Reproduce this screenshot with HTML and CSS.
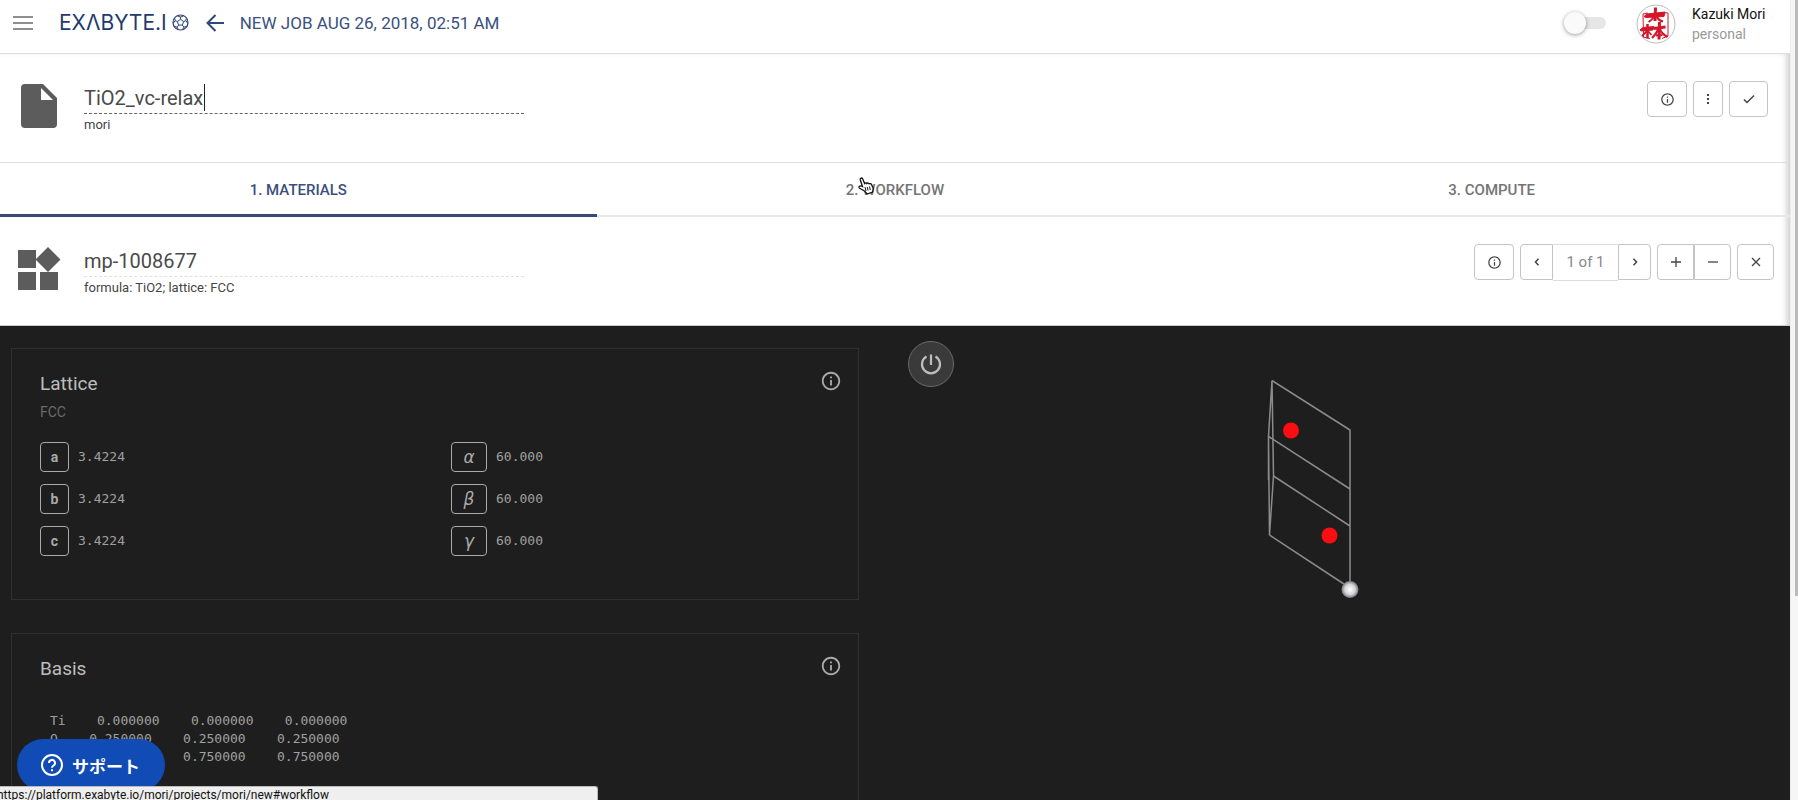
FILE: index.html
```html
<!DOCTYPE html>
<html lang="en">
<head>
<meta charset="utf-8">
<title>New Job - Exabyte.io</title>
<link rel="stylesheet" href="styles.css">
</head>
<body>
<svg class="defs" aria-hidden="true">
  <symbol id="info" viewBox="0 0 24 24"><path d="M11 17h2v-6h-2v6zm1-15C6.480 2 2 6.480 2 12s4.480 10 10 10 10-4.480 10-10S17.520 2 12 2zm0 18c-4.410 0-8-3.590-8-8s3.590-8 8-8 8 3.590 8 8-3.590 8-8 8zM11 9h2V7h-2v2z"/></symbol>
</svg>
<div class="app">
  <header class="topbar">
    <button class="plain menu" aria-label="Menu"><svg width="20" height="14" viewBox="0 0 20 14"><path d="M0 1h20M0 7h20M0 13h20" stroke="#8f8f8f" stroke-width="2"/></svg></button>
    <a class="logo" href="#" aria-label="Exabyte.io"><span>EXΛBYTE.I</span>
      <svg width="17" height="17" viewBox="0 0 17 17" fill="none" stroke="#2c4475"><circle cx="8.500" cy="8.500" r="7.500" stroke-width="1.200"/><path d="M8.500 5.300l3.100 2.200-1.200 3.600H6.600L5.400 7.500zM8.500 5.300V3M11.600 7.500l2.300-.8M10.400 11.100l1.500 2M6.600 11.100l-1.500 2M5.400 7.500l-2.300-.8M5.500 2L8.500 3l3-1M13.900 6.700l.2-2.200M13.900 6.700l1.800 2.600M11.900 13.100l2.800-.6M11.900 13.100l-1.200 2.300M5.100 13.100l1.200 2.300M5.100 13.100l-2.800-.6M3.100 6.700L1.300 9.300M3.100 6.700l-.2-2.200"/></svg></a>
    <button class="plain" aria-label="Back"><svg width="18" height="18" viewBox="0 0 18 18"><path d="M18 9H2M9.500 1L1.500 9l8 8" fill="none" stroke="#2f4a7d" stroke-width="2"/></svg></button>
    <h1>NEW JOB AUG 26, 2018, 02:51 AM</h1>
    <input class="switch" type="checkbox" aria-label="Toggle">
    <svg class="avatar" width="40" height="40" viewBox="0 0 40 40" role="img" aria-label="Avatar">
      <circle cx="20" cy="20" r="19" fill="#fff" stroke="#bbb"/>
      <g fill="none" stroke="#d3162a">
        <path d="M12 9L7 10l.5 23M7 33l7 1.500M26 8.500l6 .5v23l-6 2.500" stroke-width="1"/>
        <path d="M8 12.500l3-2.500 18-2-1 4.500-18 1z" fill="#d3162a" stroke-width="1"/><path d="M19.500 3.500L19 17" stroke-width="3"/><path d="M18 12c-1 3-3 4.500-5.500 6M21 13c1 2 3 4 6 4.500" stroke-width="2"/>
        <path d="M4 26l3-2.500 11-1-1 3.500-12 1z" fill="#d3162a" stroke-width="1"/><path d="M11.500 20v14.500" stroke-width="2.500"/><path d="M11 27l-5 5M12 27l3.500 4" stroke-width="1.800"/>
        <path d="M18 24.500l11.500-1.500" stroke-width="3"/><path d="M23.500 18l-.5 17.500" stroke-width="3"/><path d="M22 25c-1 4-3 6-6 9M24 25c1 4 4 6 7.500 8M20 31.500l6.500-.5" stroke-width="2.200"/>
      </g>
    </svg>
    <div class="user"><strong>Kazuki Mori</strong><span>personal</span></div>
  </header>

  <main>
    <section class="entity job">
      <svg class="entity-icon" width="44" height="48" viewBox="0 0 44 48"><path d="M8 3h18l14 14v26a4 4 0 0 1-4 4H8a4 4 0 0 1-4-4V7a4 4 0 0 1 4-4z" fill="#5c5c5c"/><path d="M24 7v12h12z" fill="#fff"/></svg>
      <div class="naming">
        <input class="name editing" aria-label="Job name" value="TiO2_vc-relax">
        <span class="caret"></span>
        <p>mori</p>
      </div>
      <div class="actions">
        <button class="btn" aria-label="Info"><svg width="15" height="15"><use href="#info"/></svg></button>
        <button class="btn narrow" aria-label="More"><svg width="4" height="12" viewBox="0 0 4 12" fill="#444"><path d="M1 1h2v2H1zM1 5h2v2H1zM1 9h2v2H1z"/></svg></button>
        <button class="btn check" aria-label="Confirm"><svg width="12" height="10" viewBox="0 0 12 10"><path d="M1 5.500L4 8.500 11 1.500" fill="none" stroke="#444" stroke-width="1.500"/></svg></button>
      </div>
    </section>

    <nav class="tabs">
      <a class="active" href="#materials">1. MATERIALS</a>
      <a href="#workflow">2. WORKFLOW
        <svg class="pointer" width="17" height="18" viewBox="0 0 17 18"><path d="M4.500 9.500L2.300 3C1.800 1 4 .3 4.700 2l1.900 4.500c.8-1 2-.8 2.300 0 .8-.8 2-.5 2.300.3.800-.5 2.100-.2 2.300.8l1.500 3.200c.4 1.500-.2 2.500-.4 4.200l-5.500 2-2.600-3C4.500 13 1.500 11.500 1 10.500c-.3-1.500 1.500-2 3.500-1z" fill="#fff" stroke="#111" stroke-width="1.300"/><path d="M7 10l1 4M9.300 10l.8 3.500M11.500 9.500l.8 3.500" stroke="#111"/></svg></a>
      <a href="#compute">3. COMPUTE</a>
    </nav>

    <section class="entity material">
      <svg class="entity-icon" width="44" height="48" viewBox="0 0 44 48" fill="#5c5c5c"><path d="M1 6h18v18H1zM1 28h18v18H1zM23 28h18v18H23zM31 3l12.500 12.500L31 28 18.500 15.500z"/></svg>
      <div class="naming">
        <input class="name" aria-label="Material name" value="mp-1008677">
        <p>formula: TiO2; lattice: FCC</p>
      </div>
      <div class="actions">
        <button class="btn" aria-label="Info"><svg width="15" height="15"><use href="#info"/></svg></button>
        <div class="group pager">
          <button class="btn" aria-label="Previous"><svg width="6" height="8" viewBox="0 0 6 8"><path d="M4.500.800L1.500 4l3 3.200" fill="none" stroke="#444" stroke-width="1.500"/></svg></button>
          <span class="count">1 of 1</span>
          <button class="btn" aria-label="Next"><svg width="6" height="8" viewBox="0 0 6 8"><path d="M1.500.800l3 3.200-3 3.200" fill="none" stroke="#444" stroke-width="1.500"/></svg></button>
        </div>
        <div class="group">
          <button class="btn mid" aria-label="Add"><svg width="10" height="10" viewBox="0 0 10 10"><path d="M5 0v10M0 5h10" stroke="#444" stroke-width="1.300"/></svg></button>
          <button class="btn mid" aria-label="Remove"><svg width="10" height="10" viewBox="0 0 10 10"><path d="M0 5h10" stroke="#444" stroke-width="1.300"/></svg></button>
        </div>
        <button class="btn mid" aria-label="Close"><svg width="10" height="10" viewBox="0 0 10 10"><path d="M1 1l8 8M9 1L1 9" stroke="#444" stroke-width="1.300"/></svg></button>
      </div>
    </section>

    <div class="workspace">
      <div class="panels">
        <section class="panel">
          <div class="panel-head"><h2>Lattice</h2><button class="plain" aria-label="Lattice info"><svg width="22" height="22"><use href="#info"/></svg></button></div>
          <p class="kind">FCC</p>
          <div class="params">
            <dl>
              <dt>a</dt><dd>3.4224</dd>
              <dt>b</dt><dd>3.4224</dd>
              <dt>c</dt><dd>3.4224</dd>
            </dl>
            <dl class="angles">
              <dt>α</dt><dd>60.000</dd>
              <dt>β</dt><dd>60.000</dd>
              <dt>γ</dt><dd>60.000</dd>
            </dl>
          </div>
        </section>
        <section class="panel">
          <div class="panel-head"><h2>Basis</h2><button class="plain" aria-label="Basis info"><svg width="22" height="22"><use href="#info"/></svg></button></div>
<pre>Ti    0.000000    0.000000    0.000000
O    0.250000    0.250000    0.250000
O    0.750000    0.750000    0.750000</pre>
        </section>
      </div>
      <div class="viewer">
        <button class="power" aria-label="Toggle interaction"><svg width="24" height="24" viewBox="0 0 24 24"><path d="M12 2.500V13M7.500 4.500a9 9 0 1 0 9 0" fill="none" stroke="#bdbdbd" stroke-width="2.200"/></svg></button>
        <svg class="cell" viewBox="1223 380 140 230" role="img" aria-label="Unit cell">
          <defs><radialGradient id="ti"><stop offset="0" stop-color="#fff"/><stop offset=".6" stop-color="#d5d5da"/><stop offset="1" stop-color="#777"/></radialGradient></defs>
          <g fill="none" stroke="#8c8c8c" stroke-width="1.500">
            <path d="M1272 380.500L1350 430v159M1268.500 436.500L1350 489M1273.500 476L1350 526M1269.500 535L1350 588"/>
            <path d="M1272 380.500l-3.500 56 1 98.500 4-59zM1268.500 436.500V480"/>
          </g>
          <circle cx="1291" cy="430.500" r="8" fill="#fb0d12"/>
          <circle cx="1329.500" cy="535.500" r="8" fill="#fb0d12"/>
          <circle cx="1350" cy="589.500" r="8.500" fill="url(#ti)"/>
        </svg>
      </div>
    </div>
  </main>
</div>
<div class="scrollbar"><div class="thumb"></div></div>
<button class="support"><svg width="24" height="24" viewBox="0 0 24 24" fill="none" stroke="#fff" stroke-width="2"><circle cx="12" cy="12" r="10"/><path d="M9 10a3 3 0 1 1 4.500 2.500C12.400 13.200 12 13.600 12 14.800M12 16.300v2"/></svg>サポート</button>
<div class="status">https://platform.exabyte.io/mori/projects/mori/new#workflow</div>
</body>
</html>
```
FILE: styles.css
```css
* { box-sizing: border-box; }
body {
  margin: 0;
  height: 100vh;
  overflow: hidden;
  display: flex;
  font-family: Roboto, "Noto Sans CJK JP", sans-serif;
  font-size: 14px;
  color: #444;
  background: #fff;
}
h1, h2, p, dl, dd, pre { margin: 0; font-weight: 400; }
button { font: inherit; color: inherit; cursor: pointer; }
svg { display: block; flex: none; }
.defs { position: absolute; width: 0; height: 0; }
.plain { border: 0; padding: 0; background: none; }
.app { flex: 1; min-width: 0; height: 100vh; overflow: hidden; }

.topbar {
  display: flex;
  align-items: center;
  height: 54px;
  padding: 0 22px 8px 13px;
  border-bottom: 1px solid #ddd;
}
.logo {
  display: flex;
  align-items: center;
  gap: 5px;
  margin: 0 17px 0 26px;
  font-family: Inter, sans-serif;
  font-size: 21px;
  line-height: 24px;
  color: #1f3a70;
  text-decoration: none;
}
.topbar h1 { margin-left: 16px; font-size: 17px; line-height: 24px; color: #3a5080; }
.switch {
  appearance: none;
  position: relative;
  width: 42px;
  height: 12px;
  margin: 0 30px 0 auto;
  border-radius: 6px;
  background: linear-gradient(to right, transparent 12px, #e6e6e6 12px);
}
.switch::before {
  content: "";
  position: absolute;
  left: 0;
  top: -5px;
  width: 22px;
  height: 22px;
  border-radius: 50%;
  background: #fafafa;
  box-shadow: 0 1px 4px rgba(0, 0, 0, .4);
}
.avatar, .user { margin-top: 3px; }
.user { margin-left: 16px; display: grid; min-width: 76px; line-height: 20px; }
.user strong { font-weight: 400; color: #111; }
.user span { color: #999; }

main { box-shadow: inset -6px 0 6px -3px #ccc; }
.entity { display: flex; align-items: flex-start; height: 109px; padding: 27px 22px 0 17px; }
.job { border-bottom: 1px solid #ddd; }
.material { padding-right: 16px; border-bottom: 1px solid #ccc; }
.entity-icon { margin-right: 23px; }
.naming { position: relative; flex: 0 1 440px; }
.name {
  display: block;
  width: 100%;
  height: 33px;
  padding: 2px 0 0;
  border: 0;
  border-bottom: 1px dashed #e0e0e0;
  background: none;
  outline: 0;
  font: 400 20px/30px Roboto, sans-serif;
  color: #4a4a4a;
}
.name.editing { border-bottom-color: #666; }
.caret { position: absolute; left: 120px; top: 3px; width: 1px; height: 27px; background: #222; }
.naming p { font-size: 13px; line-height: 22px; }
.actions { display: flex; gap: 6px; margin-left: auto; }
.btn {
  display: flex;
  align-items: center;
  justify-content: center;
  width: 40px;
  height: 36px;
  padding: 0;
  border: 1px solid #c4c4c4;
  border-radius: 4px;
  background: #fff;
  fill: #444;
}
.btn.narrow { width: 30px; }
.btn.check { width: 39px; }
.btn.mid { width: 37px; }
.group { display: flex; }
.group .btn:first-child { border-radius: 4px 0 0 4px; }
.group .btn:last-child { border-radius: 0 4px 4px 0; }
.pager .btn { width: 33px; }
.count {
  width: 65px;
  border: solid #ddd;
  border-width: 1px 0;
  text-align: center;
  font-size: 15px;
  line-height: 35px;
  color: #888;
}

.tabs { display: grid; grid-template-columns: repeat(3, 1fr); height: 54px; }
.tabs a {
  position: relative;
  padding-top: 3px;
  border-bottom: 2px solid #e8e8e8;
  text-align: center;
  text-decoration: none;
  font-size: 15px;
  font-weight: 500;
  line-height: 48px;
  color: #757575;
}
.tabs .active { border-bottom: 3px solid #344a78; color: #3a5080; }
.pointer { position: absolute; left: 261px; top: 14px; }

.workspace {
  display: grid;
  grid-template-columns: 1fr 1fr;
  min-height: calc(100vh - 326px);
  background: #1e1e1e;
  color: #aaa;
}
.panels { display: grid; align-content: start; gap: 33px; padding: 22px 36px 0 11px; }
.panel { min-height: 252px; padding: 21px 16px 0 28px; border: 1px solid #303030; }
.panel-head { display: flex; justify-content: space-between; align-items: flex-start; fill: #aaa; }
h2 { font-size: 19px; line-height: 28px; color: #bdbdbd; }
.kind { margin-top: 4px; line-height: 20px; color: #6a6a6a; }
.params { display: grid; grid-template-columns: 1fr 1fr; column-gap: 20px; margin-top: 20px; }
dl { display: grid; grid-template-columns: auto 1fr; gap: 12px 9px; line-height: 28px; }
dt {
  width: 29px;
  border: 1px solid #aaa;
  border-radius: 4px;
  text-align: center;
  font-weight: 700;
}
.angles dt { width: 36px; font: italic 400 17px/28px "DejaVu Sans", sans-serif; }
dd, pre { font-family: "DejaVu Sans Mono", monospace; font-size: 13px; color: #a0a0a0; }
dd { line-height: 30px; }
pre { margin: 29px 0 0 10px; line-height: 18px; }
.viewer { display: flex; flex-direction: column; align-items: flex-start; padding: 15px 113px 0 13px; }
.power {
  display: grid;
  place-items: center;
  width: 46px;
  height: 46px;
  padding: 0;
  border: 1px solid #6a6a6a;
  border-radius: 50%;
  background: #3a3a3a;
}
.cell { width: 140px; height: 230px; margin: -7px auto 0; }

.scrollbar { flex: none; width: 8px; padding-left: 4px; background: #f6f6f6; border-left: 1px solid #ececec; }
.thumb { height: 74.500%; background: #bbb; }
.support {
  position: fixed;
  left: 17px;
  bottom: 9px;
  display: flex;
  align-items: center;
  gap: 8px;
  height: 52px;
  padding: 0 25px 0 23px;
  border: 0;
  border-radius: 26px;
  background: #114bb5;
  color: #fff;
  font-family: "Noto Sans CJK JP", sans-serif;
  font-size: 17px;
  font-weight: 700;
}
.status {
  position: fixed;
  left: 0;
  bottom: 0;
  width: 598px;
  height: 14px;
  overflow: hidden;
  border: solid #bbb;
  border-width: 1px 1px 0 0;
  border-top-right-radius: 3px;
  background: #efefef;
  color: #111;
  font-size: 12px;
  line-height: 16px;
  text-indent: -3px;
}
```
